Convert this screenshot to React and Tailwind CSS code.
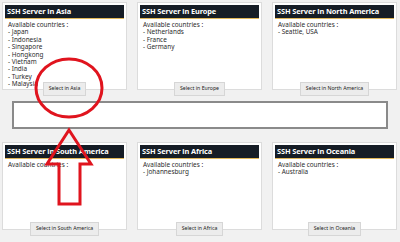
import React from "react";

const regions = [
  { name: "Asia", list: ["Japan", "Indonesia", "Singapore", "Hongkong", "Vietnam", "India", "Turkey", "Malaysia"] },
  { name: "Europe", list: ["Netherlands", "France", "Germany"] },
  { name: "North America", list: ["Seattle, USA"] },
  { name: "South America", list: [] },
  { name: "Africa", list: ["Johannesburg"] },
  { name: "Oceania", list: ["Australia"] },
];

const ServerCard = ({ name, list }) => (
  <div className="w-[125px] flex flex-col items-center">
    <div className="w-full h-[88px] bg-white border border-[#dcdcdc] p-[2px] flex flex-col">
      <div className="h-[14px] bg-[#161d26] border-b border-[#e2b85a] text-white font-bold text-[7.4px] leading-[13px] px-[2px] tracking-[-0.1px] whitespace-nowrap">
        SSH Server in {name}
      </div>
      <div className="px-[3px] pt-[2px] text-[6.4px] leading-[7.4px] text-[#2b2b2b]">
        <div>Available countries :</div>
        {list.map((c) => (
          <div key={c}>- {c}</div>
        ))}
      </div>
    </div>
    <button className="-mt-[8px] h-[14px] px-[5px] bg-[#ececec] border border-[#d6d6d6] text-[5.2px] text-[#222] leading-none whitespace-nowrap">
      Select in {name}
    </button>
  </div>
);

export default function App() {
  return (
    <div
      className="relative w-[400px] h-[242px] overflow-hidden bg-[#f1f1f1]"
      style={{ fontFamily: '"Noto Sans", "DejaVu Sans", sans-serif' }}
    >
      <div className="flex gap-[10px] pl-[2px] pt-[2px]">
        {regions.slice(0, 3).map((r) => (
          <ServerCard key={r.name} {...r} />
        ))}
      </div>

      <div className="mx-[12px] mt-[5px] h-[28px] bg-white border-2 border-[#8a8a8a]" />

      <div className="flex gap-[10px] pl-[2px] mt-[13px]">
        {regions.slice(3).map((r) => (
          <ServerCard key={r.name} {...r} />
        ))}
      </div>

      {/* annotation overlay */}
      <svg className="absolute left-0 top-0 pointer-events-none" width="400" height="242">
        <ellipse cx="69" cy="88" rx="33" ry="29" fill="none" stroke="#e0141e" strokeWidth="3" />
        <path
          d="M69 130 L91 164 L80 164 L80 204 L59 204 L59 164 L47 164 Z"
          fill="none"
          stroke="#e0141e"
          strokeWidth="3"
          strokeLinejoin="miter"
        />
      </svg>
    </div>
  );
}
